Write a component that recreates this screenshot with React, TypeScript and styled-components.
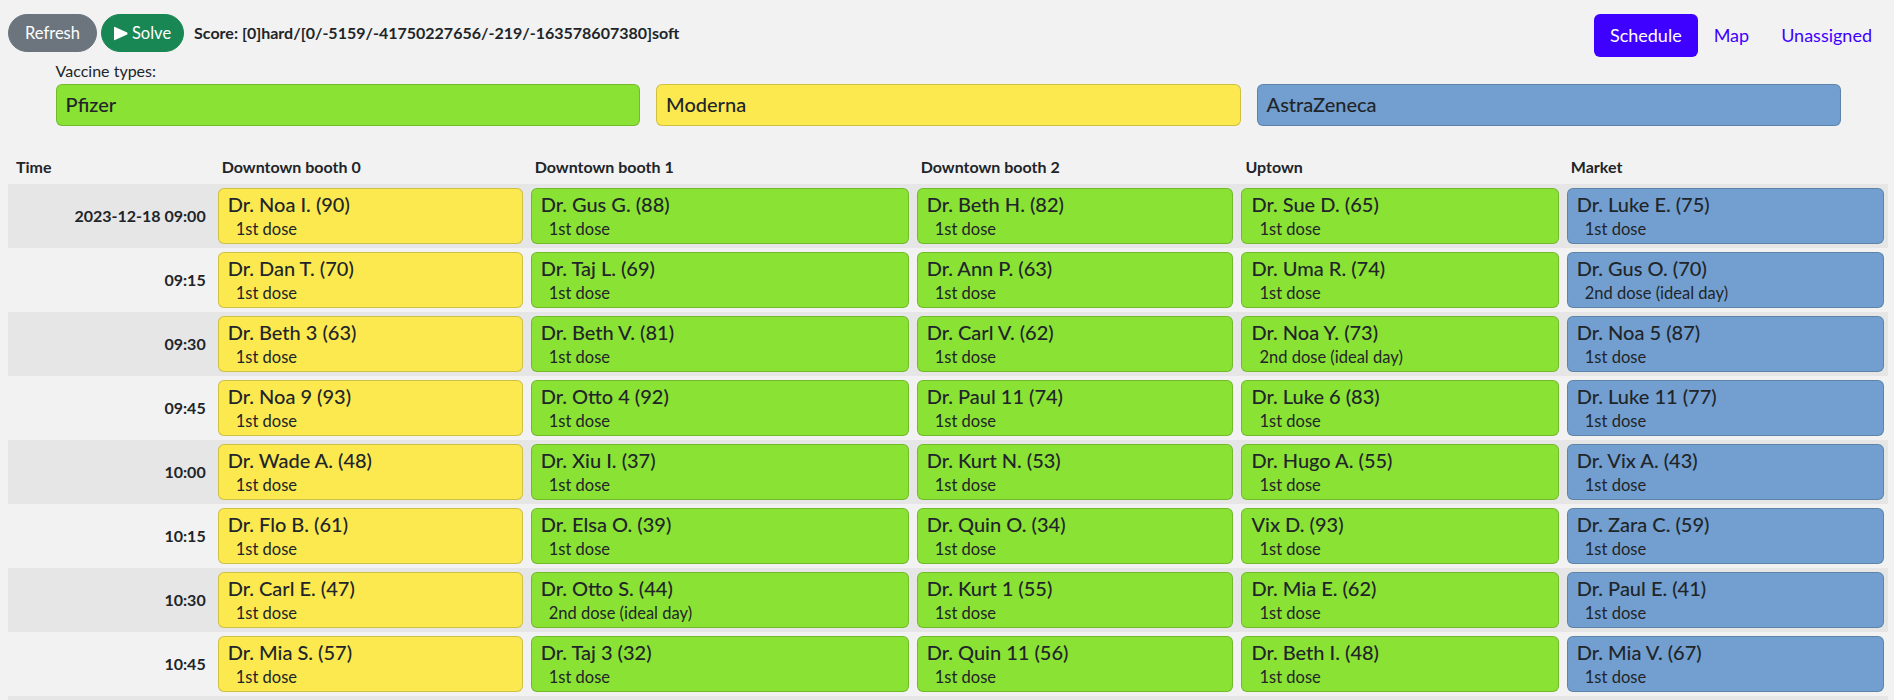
import React from 'react';
import styled, { createGlobalStyle } from 'styled-components';

const FONT = `Lato, "Liberation Sans", sans-serif`;

const GlobalStyle = createGlobalStyle`
  html, body {
    margin: 0;
    padding: 0;
    background: #f2f2f2;
    color: #212529;
    font-family: ${FONT};
    font-size: 16px;
    line-height: 1.5;
  }
  * { box-sizing: border-box; }
`;

type Vaccine = 'P' | 'M' | 'A';

const VACCINE_COLORS: Record<Vaccine, string> = {
  P: '#8ae234',
  M: '#fce94f',
  A: '#729fcf',
};

const Page = styled.div`
  padding: 14px 6px 0 8px;
`;

const TopBar = styled.div`
  display: flex;
  justify-content: space-between;
  align-items: flex-start;
`;

const Controls = styled.div`
  display: flex;
  align-items: center;
  gap: 4px;
`;

const Btn = styled.button<{ $variant: 'secondary' | 'success' }>`
  display: inline-flex;
  align-items: center;
  gap: 4px;
  height: 38px;
  padding: 0 ${(p) => (p.$variant === 'success' ? '12px' : '16px')};
  border-radius: 50rem;
  border: 1px solid ${(p) => (p.$variant === 'success' ? '#198754' : '#6c757d')};
  background: ${(p) => (p.$variant === 'success' ? '#198754' : '#6c757d')};
  color: #fff;
  font-family: ${FONT};
  font-size: 16.5px;
  line-height: 24px;
  cursor: pointer;
`;

const Score = styled.span`
  margin-left: 6px;
  font-weight: 700;
  font-size: 16px;
`;

const Nav = styled.nav`
  display: flex;
  align-items: center;
`;

const NavLink = styled.a<{ $active?: boolean }>`
  display: block;
  padding: 8px 16px;
  font-size: 18px;
  line-height: 27px;
  border-radius: 6px;
  text-decoration: none;
  color: ${(p) => (p.$active ? '#fff' : '#3e00ff')};
  background: ${(p) => (p.$active ? '#3e00ff' : 'transparent')};
  cursor: pointer;
`;

const VaccineSection = styled.section`
  margin: 2px 47px 0 47.6px;
`;

const VaccineLabel = styled.div`
  font-size: 16px;
  line-height: 24px;
  margin-bottom: 1px;
`;

const VaccineGrid = styled.div`
  display: grid;
  grid-template-columns: repeat(3, 1fr);
  gap: 16px;
`;

const VaccineBox = styled.div<{ $color: string }>`
  background: ${(p) => p.$color};
  border: 1px solid rgba(0, 0, 0, 0.175);
  border-radius: 6px;
  padding: 0 9px;
  font-size: 20px;
  line-height: 27px;
  font-weight: 500;
  height: 41.5px;
  display: flex;
  align-items: center;
`;

const COLUMNS = '205.7px 313px 386px 324.75px 325.35px 325.15px';

const HeaderRow = styled.div`
  display: grid;
  grid-template-columns: ${COLUMNS};
  padding-top: 29px;
  padding-bottom: 5.5px;
`;

const HeaderCell = styled.div`
  padding: 0 8px;
  font-weight: 700;
  font-size: 16px;
  line-height: 24px;
`;

const Row = styled.div<{ $striped: boolean }>`
  display: grid;
  grid-template-columns: ${COLUMNS};
  background: ${(p) => (p.$striped ? '#e6e6e6' : 'transparent')};
`;

const TimeCell = styled.div`
  padding: 0 8px;
  align-self: center;
  text-align: right;
  font-weight: 700;
  font-size: 16px;
  line-height: 24px;
`;

const SlotCell = styled.div`
  padding: 4px;
`;

const Card = styled.div<{ $color: string }>`
  background: ${(p) => p.$color};
  border: 1px solid rgba(0, 0, 0, 0.175);
  border-radius: 6px;
  padding: 3px 9px 0;
  height: 56px;
`;

const Name = styled.div`
  font-size: 20px;
  line-height: 24px;
  font-weight: 500;
  margin-bottom: 2px;
`;

const Dose = styled.div`
  margin-left: 8px;
  font-size: 16.5px;
  line-height: 22px;
`;

const PlayIcon = () => (
  <svg width="14" height="15" viewBox="0 0 14 15" aria-hidden="true">
    <path d="M1 0.9 L13.2 6.6 Q14 7.5 13.2 8.4 L1 14.1 Q0 14.5 0 13.4 L0 1.6 Q0 0.5 1 0.9 Z" fill="#fff" />
  </svg>
);

type Slot = [string, Vaccine, string];

const FIRST = '1st dose';
const SECOND = '2nd dose (ideal day)';

const ROWS: { time: string; slots: Slot[] }[] = [
  {
    time: '2023-12-18 09:00',
    slots: [
      ['Dr. Noa I. (90)', 'M', FIRST],
      ['Dr. Gus G. (88)', 'P', FIRST],
      ['Dr. Beth H. (82)', 'P', FIRST],
      ['Dr. Sue D. (65)', 'P', FIRST],
      ['Dr. Luke E. (75)', 'A', FIRST],
    ],
  },
  {
    time: '09:15',
    slots: [
      ['Dr. Dan T. (70)', 'M', FIRST],
      ['Dr. Taj L. (69)', 'P', FIRST],
      ['Dr. Ann P. (63)', 'P', FIRST],
      ['Dr. Uma R. (74)', 'P', FIRST],
      ['Dr. Gus O. (70)', 'A', SECOND],
    ],
  },
  {
    time: '09:30',
    slots: [
      ['Dr. Beth 3 (63)', 'M', FIRST],
      ['Dr. Beth V. (81)', 'P', FIRST],
      ['Dr. Carl V. (62)', 'P', FIRST],
      ['Dr. Noa Y. (73)', 'P', SECOND],
      ['Dr. Noa 5 (87)', 'A', FIRST],
    ],
  },
  {
    time: '09:45',
    slots: [
      ['Dr. Noa 9 (93)', 'M', FIRST],
      ['Dr. Otto 4 (92)', 'P', FIRST],
      ['Dr. Paul 11 (74)', 'P', FIRST],
      ['Dr. Luke 6 (83)', 'P', FIRST],
      ['Dr. Luke 11 (77)', 'A', FIRST],
    ],
  },
  {
    time: '10:00',
    slots: [
      ['Dr. Wade A. (48)', 'M', FIRST],
      ['Dr. Xiu I. (37)', 'P', FIRST],
      ['Dr. Kurt N. (53)', 'P', FIRST],
      ['Dr. Hugo A. (55)', 'P', FIRST],
      ['Dr. Vix A. (43)', 'A', FIRST],
    ],
  },
  {
    time: '10:15',
    slots: [
      ['Dr. Flo B. (61)', 'M', FIRST],
      ['Dr. Elsa O. (39)', 'P', FIRST],
      ['Dr. Quin O. (34)', 'P', FIRST],
      ['Vix D. (93)', 'P', FIRST],
      ['Dr. Zara C. (59)', 'A', FIRST],
    ],
  },
  {
    time: '10:30',
    slots: [
      ['Dr. Carl E. (47)', 'M', FIRST],
      ['Dr. Otto S. (44)', 'P', SECOND],
      ['Dr. Kurt 1 (55)', 'P', FIRST],
      ['Dr. Mia E. (62)', 'P', FIRST],
      ['Dr. Paul E. (41)', 'A', FIRST],
    ],
  },
  {
    time: '10:45',
    slots: [
      ['Dr. Mia S. (57)', 'M', FIRST],
      ['Dr. Taj 3 (32)', 'P', FIRST],
      ['Dr. Quin 11 (56)', 'P', FIRST],
      ['Dr. Beth I. (48)', 'P', FIRST],
      ['Dr. Mia V. (67)', 'A', FIRST],
    ],
  },
  {
    time: '11:00',
    slots: [
      ['Dr. Ann 7 (58)', 'M', FIRST],
      ['Dr. Hugo 2 (41)', 'P', FIRST],
      ['Dr. Elsa 9 (66)', 'P', FIRST],
      ['Dr. Dan K. (50)', 'P', FIRST],
      ['Dr. Sue 4 (72)', 'A', FIRST],
    ],
  },
];

const LOCATIONS = ['Downtown booth 0', 'Downtown booth 1', 'Downtown booth 2', 'Uptown', 'Market'];

export default function App() {
  return (
    <>
      <GlobalStyle />
      <Page>
        <TopBar>
          <Controls>
            <Btn $variant="secondary">Refresh</Btn>
            <Btn $variant="success">
              <PlayIcon />
              Solve
            </Btn>
            <Score>Score: [0]hard/[0/-5159/-41750227656/-219/-163578607380]soft</Score>
          </Controls>
          <Nav>
            <NavLink $active>Schedule</NavLink>
            <NavLink>Map</NavLink>
            <NavLink>Unassigned</NavLink>
          </Nav>
        </TopBar>

        <VaccineSection>
          <VaccineLabel>Vaccine types:</VaccineLabel>
          <VaccineGrid>
            <VaccineBox $color={VACCINE_COLORS.P}>Pfizer</VaccineBox>
            <VaccineBox $color={VACCINE_COLORS.M}>Moderna</VaccineBox>
            <VaccineBox $color={VACCINE_COLORS.A}>AstraZeneca</VaccineBox>
          </VaccineGrid>
        </VaccineSection>

        <div>
          <HeaderRow>
            <HeaderCell>Time</HeaderCell>
            {LOCATIONS.map((l) => (
              <HeaderCell key={l}>{l}</HeaderCell>
            ))}
          </HeaderRow>
          {ROWS.map((row, i) => (
            <Row key={row.time} $striped={i % 2 === 0}>
              <TimeCell>{row.time}</TimeCell>
              {row.slots.map(([name, v, dose], j) => (
                <SlotCell key={j}>
                  <Card $color={VACCINE_COLORS[v]}>
                    <Name>{name}</Name>
                    <Dose>{dose}</Dose>
                  </Card>
                </SlotCell>
              ))}
            </Row>
          ))}
        </div>
      </Page>
    </>
  );
}
